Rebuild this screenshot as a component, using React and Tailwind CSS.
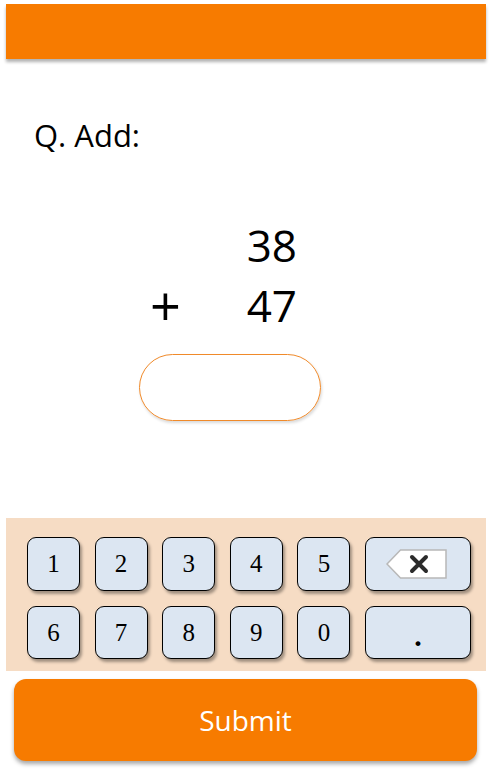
const KEY = 'h-full w-[53px] rounded-[9px] border border-black bg-[#dce6f2] shadow-[2px_3px_3px_rgba(0,0,0,0.35)] flex items-center justify-center text-[25px] text-black';

function BackspaceIcon() {
  return (
    <svg width="61" height="30" viewBox="0 0 61 30">
      <path d="M1 15 L14.5 1 H60 V29 H14.5 Z" fill="#ffffff" stroke="#b8b8b8" strokeWidth="1.5" />
      <path d="M26 8 L40 22 M40 8 L26 22" stroke="#2b2b2b" strokeWidth="4" strokeLinecap="round" />
    </svg>
  );
}

export default function App() {
  const row1 = ['1', '2', '3', '4', '5'];
  const row2 = ['6', '7', '8', '9', '0'];

  return (
    <div className="w-[492px] h-[770px] bg-white flex flex-col overflow-hidden" style={{ fontFamily: '"Open Sans", sans-serif' }}>
      {/* top bar */}
      <div className="mt-[4px] mx-[6px] h-[55px] bg-[#f77b00] shadow-[0_3px_3px_rgba(0,0,0,0.3)]" />

      {/* question */}
      <div className="mt-[61px] pl-[34px] text-[31px] leading-none text-black">Q. Add:</div>

      {/* sum */}
      <div className="mt-[64px] pl-[148px] flex text-black">
        <div className="w-[40px] flex flex-col">
          <div className="h-[60px]" />
          <div className="h-[60px] text-[54px] leading-[60px] pl-[2px]">+</div>
        </div>
        <div className="w-[109px] flex flex-col text-right text-[44px] leading-[60px]">
          <div className="h-[60px]">38</div>
          <div className="h-[60px]">47</div>
        </div>
      </div>

      {/* answer box */}
      <div className="mt-[19px] ml-[139px] w-[182px] h-[67px] rounded-full border border-[#f08a2a] shadow-[1px_2px_3px_rgba(0,0,0,0.15)]" />

      {/* keypad */}
      <div className="mt-[97px] mx-[6px] h-[153px] bg-[#f6dcc4] pt-[19px] pb-[12px] pl-[21px] flex flex-col gap-[15px]" style={{ fontFamily: '"Liberation Serif", serif' }}>
        <div className="h-[54px] flex gap-[14.6px]">
          {row1.map((k) => (
            <div key={k} className={KEY}>{k}</div>
          ))}
          <div className="h-full w-[106px] rounded-[9px] border border-black bg-[#dce6f2] shadow-[2px_3px_3px_rgba(0,0,0,0.35)] flex items-center justify-center pr-[2px]">
            <BackspaceIcon />
          </div>
        </div>
        <div className="h-[53px] flex gap-[14.6px]">
          {row2.map((k) => (
            <div key={k} className={KEY}>{k}</div>
          ))}
          <div className="h-full w-[106px] rounded-[9px] border border-black bg-[#dce6f2] shadow-[2px_3px_3px_rgba(0,0,0,0.35)] flex items-center justify-center text-[30px] font-bold pt-[5px]">.</div>
        </div>
      </div>

      {/* submit */}
      <div className="mt-[8px] ml-[14px] w-[463px] h-[82px] rounded-[12px] bg-[#f77b00] shadow-[0_3px_4px_rgba(0,0,0,0.35)] flex items-center justify-center text-white text-[28px]">
        Submit
      </div>
    </div>
  );
}
